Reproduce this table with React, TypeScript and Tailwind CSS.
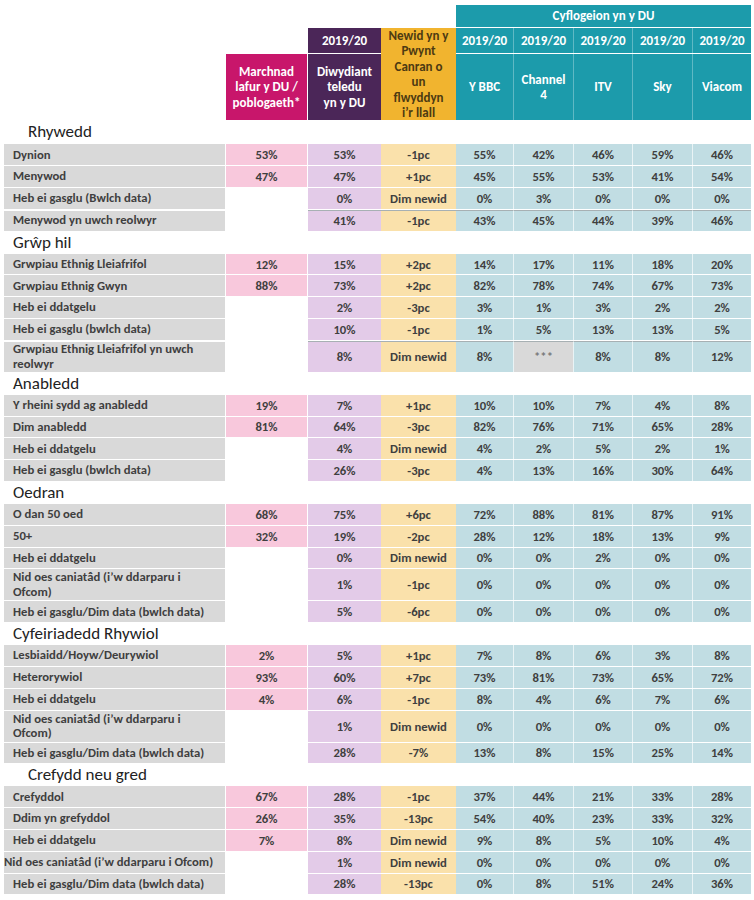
import React from "react";

type Row = {
  label: React.ReactNode;
  pop?: string;
  tv: string;
  change: string;
  bc: string[];
  tall?: boolean;
  rule?: boolean;
  flush?: boolean;
};

type Section = { title: string; indent?: boolean; rows: Row[] };

const FONT = "font-['Carlito','Lato','Liberation_Sans',sans-serif]";

const sections: Section[] = [
  {
    title: "Rhywedd",
    indent: true,
    rows: [
      { label: "Dynion", pop: "53%", tv: "53%", change: "-1pc", bc: ["55%", "42%", "46%", "59%", "46%"] },
      { label: "Menywod", pop: "47%", tv: "47%", change: "+1pc", bc: ["45%", "55%", "53%", "41%", "54%"] },
      { label: "Heb ei gasglu (Bwlch data)", tv: "0%", change: "Dim newid", bc: ["0%", "3%", "0%", "0%", "0%"] },
      { label: "Menywod yn uwch reolwyr", tv: "41%", change: "-1pc", bc: ["43%", "45%", "44%", "39%", "46%"], rule: true },
    ],
  },
  {
    title: "Grŵp hil",
    rows: [
      { label: "Grwpiau Ethnig Lleiafrifol", pop: "12%", tv: "15%", change: "+2pc", bc: ["14%", "17%", "11%", "18%", "20%"] },
      { label: "Grwpiau Ethnig Gwyn", pop: "88%", tv: "73%", change: "+2pc", bc: ["82%", "78%", "74%", "67%", "73%"] },
      { label: "Heb ei ddatgelu", tv: "2%", change: "-3pc", bc: ["3%", "1%", "3%", "2%", "2%"] },
      { label: "Heb ei gasglu (bwlch data)", tv: "10%", change: "-1pc", bc: ["1%", "5%", "13%", "13%", "5%"] },
      {
        label: (
          <>
            Grwpiau Ethnig Lleiafrifol yn uwch
            <br />
            reolwyr
          </>
        ),
        tv: "8%",
        change: "Dim newid",
        bc: ["8%", "***", "8%", "8%", "12%"],
        tall: true,
        rule: true,
      },
    ],
  },
  {
    title: "Anabledd",
    rows: [
      { label: "Y rheini sydd ag anabledd", pop: "19%", tv: "7%", change: "+1pc", bc: ["10%", "10%", "7%", "4%", "8%"] },
      { label: "Dim anabledd", pop: "81%", tv: "64%", change: "-3pc", bc: ["82%", "76%", "71%", "65%", "28%"] },
      { label: "Heb ei ddatgelu", tv: "4%", change: "Dim newid", bc: ["4%", "2%", "5%", "2%", "1%"] },
      { label: "Heb ei gasglu (bwlch data)", tv: "26%", change: "-3pc", bc: ["4%", "13%", "16%", "30%", "64%"] },
    ],
  },
  {
    title: "Oedran",
    rows: [
      { label: "O dan 50 oed", pop: "68%", tv: "75%", change: "+6pc", bc: ["72%", "88%", "81%", "87%", "91%"] },
      { label: "50+", pop: "32%", tv: "19%", change: "-2pc", bc: ["28%", "12%", "18%", "13%", "9%"] },
      { label: "Heb ei ddatgelu", tv: "0%", change: "Dim newid", bc: ["0%", "0%", "2%", "0%", "0%"] },
      {
        label: (
          <>
            Nid oes caniatâd (i’w ddarparu i
            <br />
            Ofcom)
          </>
        ),
        tv: "1%",
        change: "-1pc",
        bc: ["0%", "0%", "0%", "0%", "0%"],
        tall: true,
      },
      { label: "Heb ei gasglu/Dim data (bwlch data)", tv: "5%", change: "-6pc", bc: ["0%", "0%", "0%", "0%", "0%"] },
    ],
  },
  {
    title: "Cyfeiriadedd Rhywiol",
    rows: [
      { label: "Lesbiaidd/Hoyw/Deurywiol", pop: "2%", tv: "5%", change: "+1pc", bc: ["7%", "8%", "6%", "3%", "8%"] },
      { label: "Heterorywiol", pop: "93%", tv: "60%", change: "+7pc", bc: ["73%", "81%", "73%", "65%", "72%"] },
      { label: "Heb ei ddatgelu", pop: "4%", tv: "6%", change: "-1pc", bc: ["8%", "4%", "6%", "7%", "6%"] },
      {
        label: (
          <>
            Nid oes caniatâd (i’w ddarparu i
            <br />
            Ofcom)
          </>
        ),
        tv: "1%",
        change: "Dim newid",
        bc: ["0%", "0%", "0%", "0%", "0%"],
        tall: true,
      },
      { label: "Heb ei gasglu/Dim data (bwlch data)", tv: "28%", change: "-7%", bc: ["13%", "8%", "15%", "25%", "14%"] },
    ],
  },
  {
    title: "Crefydd neu gred",
    indent: true,
    rows: [
      { label: "Crefyddol", pop: "67%", tv: "28%", change: "-1pc", bc: ["37%", "44%", "21%", "33%", "28%"] },
      { label: "Ddim yn grefyddol", pop: "26%", tv: "35%", change: "-13pc", bc: ["54%", "40%", "23%", "33%", "32%"] },
      { label: "Heb ei ddatgelu", pop: "7%", tv: "8%", change: "Dim newid", bc: ["9%", "8%", "5%", "10%", "4%"] },
      {
        label: "Nid oes caniatâd (i’w ddarparu i Ofcom)",
        tv: "1%",
        change: "Dim newid",
        bc: ["0%", "0%", "0%", "0%", "0%"],
        flush: true,
      },
      { label: "Heb ei gasglu/Dim data (bwlch data)", tv: "28%", change: "-13pc", bc: ["0%", "8%", "51%", "24%", "36%"] },
    ],
  },
];

const broadcasters = ["Y BBC", "Channel 4", "ITV", "Sky", "Viacom"];

function DataRow({ row }: { row: Row }) {
  const h = row.tall ? "h-[31px]" : "h-[20.8px]";
  const rule = row.rule ? "border-t border-[#a7b0b3]" : "";
  const cell = `${h} ${rule} flex items-center justify-center`;
  return (
    <>
      <div
        className={`${h} ${rule} flex items-center bg-[#d9d9d9] border-r border-white leading-[14.5px] whitespace-nowrap ${
          row.flush ? "pl-0" : "pl-[9px]"
        }`}
      >
        <span>{row.label}</span>
      </div>
      {row.pop ? (
        <div className={`${h} flex items-center justify-center bg-[#f8c8dc] border-r border-white`}>{row.pop}</div>
      ) : (
        <div className={`${h} border-r border-white`} />
      )}
      <div className={`${cell} bg-[#e3cbe8]`}>{row.tv}</div>
      <div className={`${cell} bg-[#fae1ab]`}>{row.change}</div>
      {row.bc.map((v, i) => (
        <div
          key={i}
          className={`${cell} ${i < 4 ? "border-r border-r-[#e9f3f5]" : ""} ${
            v === "***" ? "bg-[#d9d9d9] text-[#7a7a7a]" : "bg-[#c1dde3]"
          }`}
        >
          {v}
        </div>
      ))}
    </>
  );
}

export default function App() {
  return (
    <div className={`w-[754px] min-h-[900px] bg-white ${FONT} text-[12.7px] font-bold text-[#3f3f3f]`}>
      <div className="ml-[4px] grid grid-cols-[222px_82px_73px_75px_58px_60px_59px_60px_58px] gap-y-px pt-[5px]">
        {/* header row 1 */}
        <div className="col-span-4 h-[22px]" />
        <div className="col-span-5 flex h-[22px] items-center justify-center bg-[#1c9bab] text-[13px] text-white">
          Cyflogeion yn y DU
        </div>

        {/* header row 2 */}
        <div className="col-span-2 h-[25px]" />
        <div className="flex h-[25px] items-center justify-center bg-[#4b2658] text-[13px] text-white">2019/20</div>
        <div className="row-span-2 flex flex-col items-center bg-[#f1b42f] text-center text-[13px] leading-[15.4px] text-[#4d3a12]">
          <span>
            Newid yn y
            <br />
            Pwynt
            <br />
            Canran o
            <br />
            un
            <br />
            flwyddyn
            <br />
            i’r llall
          </span>
        </div>
        {broadcasters.map((_, i) => (
          <div
            key={i}
            className={`flex h-[25px] items-center justify-center bg-[#1c9bab] text-[13px] text-white ${
              i < 4 ? "border-r border-r-[#5fb9c4]" : ""
            }`}
          >
            2019/20
          </div>
        ))}

        {/* header row 3 */}
        <div className="h-[66px]" />
        <div className="flex h-[66px] items-center justify-center border-r border-white bg-[#c8166b] text-center text-[13px] leading-[15.5px] text-white">
          <span>
            Marchnad
            <br />
            lafur y DU /
            <br />
            poblogaeth*
          </span>
        </div>
        <div className="flex h-[66px] items-center justify-center bg-[#4b2658] text-center text-[13px] leading-[15.5px] text-white">
          <span>
            Diwydiant
            <br />
            teledu
            <br />
            yn y DU
          </span>
        </div>
        {broadcasters.map((b, i) => (
          <div
            key={b}
            className={`flex h-[66px] items-center justify-center bg-[#1c9bab] text-center text-[13px] leading-[15.5px] text-white ${
              i < 4 ? "border-r border-r-[#5fb9c4]" : ""
            }`}
          >
            {b === "Channel 4" ? (
              <span>
                Channel
                <br />4
              </span>
            ) : (
              b
            )}
          </div>
        ))}

        {sections.map((s, si) => (
          <React.Fragment key={s.title}>
            <div
              className={`col-span-9 flex items-end font-normal text-[17px] leading-none text-[#222] ${
                si === 0 ? "h-[22px] pb-[3px]" : "h-[21px] pb-[2px]"
              } ${s.indent ? "pl-[24px]" : "pl-[9px]"}`}
            >
              {s.title}
            </div>
            {s.rows.map((r, ri) => (
              <DataRow key={ri} row={r} />
            ))}
          </React.Fragment>
        ))}
      </div>
    </div>
  );
}
